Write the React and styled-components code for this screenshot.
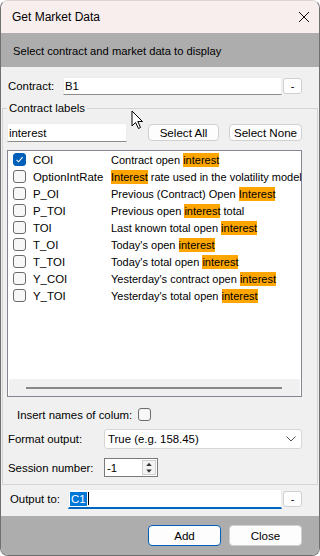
import styled, { createGlobalStyle } from "styled-components";

const GlobalStyle = createGlobalStyle`
  body {
    margin: 0;
    background: #fff;
    font-family: "Liberation Sans", Arial, sans-serif;
    font-size: 11px;
    color: #000;
  }
`

const Window = styled.div`
  position: relative;
  width: 320px;
  height: 556px;
  box-sizing: border-box;
  display: flex;
  flex-direction: column;
  border: 1px solid #6f6f6f;
  border-top-color: #ddd3d3;
  border-radius: 8px;
  overflow: hidden;
  background: #f0f0f0;
`

const TitleBar = styled.div`
  height: 32px;
  flex-shrink: 0;
  display: flex;
  align-items: center;
  justify-content: space-between;
  padding: 0 9px 0 11px;
  background: #f9eeee;
  font-size: 12px;
`

const Banner = styled.div`
  height: 34px;
  flex-shrink: 0;
  display: flex;
  align-items: center;
  padding: 2px 0 0 12px;
  box-sizing: border-box;
  background: #adadad;
  font-size: 11.2px;
`

const Body = styled.div`
  flex: 1;
  display: flex;
  flex-direction: column;
  padding-top: 10px;
`

const Row = styled.div`
  display: flex;
  align-items: center;
  padding-left: ${p => p.$indent || 0}px;
  margin-top: ${p => p.$top || 0}px;
`

const Label = styled.div`
  width: ${p => p.$w ? `${p.$w}px` : "auto"};
  flex-shrink: 0;
  white-space: nowrap;
  font-size: 11.4px;
`

const TextBox = styled.div`
  width: ${p => p.$w}px;
  height: ${p => p.$h || 18}px;
  box-sizing: border-box;
  display: flex;
  align-items: center;
  padding: 0 1px;
  background: #fff;
  border: 1px solid #ececec;
  border-bottom: ${p => p.$focus ? "2px solid #0067c0" : "1px solid #8c8c8c"};
  font-size: 11.4px;
`

const Selected = styled.span`
  background: #0078d7;
  color: #fff;
  padding: 0 1px;
  margin-right: 1px;
  line-height: 14px;
`

const Caret = styled.span`
  display: inline-block;
  width: 1px;
  height: 13px;
  background: #000;
`

const MiniButton = styled.div`
  width: 19px;
  height: 16px;
  margin-left: 1px;
  box-sizing: border-box;
  display: flex;
  align-items: center;
  justify-content: center;
  background: #fdfdfd;
  border: 1px solid #d0d0d0;
  border-radius: 3px;
  line-height: 1;
`

const Button = styled.div`
  width: ${p => p.$w || 73}px;
  height: ${p => p.$h || 21}px;
  margin-left: ${p => p.$gap || 0}px;
  box-sizing: border-box;
  display: flex;
  align-items: center;
  justify-content: center;
  background: #fdfdfd;
  border: 1px solid ${p => p.$primary ? "#005fb8" : "#d0d0d0"};
  border-radius: 4px;
  font-size: 11.6px;
`

const Group = styled.fieldset`
  margin: 6px 1px 0 1px;
  padding: 8px 15px 7px 4px;
  border: 1px solid #d4d4d4;
  min-width: 0;
`

const Legend = styled.legend`
  padding: 0 2px;
  line-height: 14px;
  font-size: 11.4px;
`

const ListBox = styled.div`
  margin-top: 8px;
  width: 295px;
  height: 247px;
  box-sizing: border-box;
  display: flex;
  flex-direction: column;
  background: #fff;
  border: 1px solid #828790;
`

const Rows = styled.div`
  flex: 1;
  padding-left: 5px;
`

const ItemRow = styled.div`
  height: 17px;
  display: flex;
  align-items: center;
  white-space: nowrap;
`

const Name = styled.div`
  width: 78px;
  margin-left: 7px;
  flex-shrink: 0;
  font-size: 11.4px;
`

const Mark = styled.span`
  background: #ffa500;
  padding: 1px 0;
`

const Box = styled.span`
  width: 13px;
  height: 13px;
  flex-shrink: 0;
  box-sizing: border-box;
  display: inline-flex;
  align-items: center;
  justify-content: center;
  border-radius: 3px;
  border: 1px solid ${p => p.$checked ? "#005fb8" : "#6b6b6b"};
  background: ${p => p.$checked ? "#005fb8" : "#f7f7f7"};
  margin-left: ${p => p.$gap || 0}px;
`

const ScrollTrack = styled.div`
  height: 17px;
  margin: 0 1px;
  display: flex;
  align-items: center;
  background: #f0f0f0;
`

const Thumb = styled.div`
  flex: 1;
  height: 2px;
  margin: 0 18px 0 17px;
  background: #888;
`

const Select = styled.div`
  width: 198px;
  height: 20px;
  box-sizing: border-box;
  display: flex;
  align-items: center;
  justify-content: space-between;
  padding: 0 5px 0 3px;
  background: #fff;
  border: 1px solid #d6d6d6;
  border-radius: 3px;
  font-size: 11.4px;
`

const Spinner = styled.div`
  width: 54px;
  height: 19px;
  box-sizing: border-box;
  display: flex;
  align-items: center;
  justify-content: space-between;
  padding-left: 2px;
  background: #fff;
  border: 1px solid #7a7a7a;
  font-size: 11.4px;
`

const SpinArrows = styled.div`
  width: 14px;
  height: 15px;
  margin-right: 1px;
  box-sizing: border-box;
  display: flex;
  flex-direction: column;
  border: 1px solid #cfcfcf;
  background: #f3f3f3;
  svg { flex: 1; }
`

const Footer = styled.div`
  height: 39px;
  flex-shrink: 0;
  display: flex;
  align-items: center;
  justify-content: flex-end;
  padding-right: 17px;
  background: #adadad;
`

const Cursor = styled.svg`
  position: absolute;
  left: 130px;
  top: 109px;
`

const items = [
  { name: "COI", checked: true, desc: ["Contract open ", "interest", ""] },
  { name: "OptionIntRate", desc: ["", "Interest", " rate used in the volatility model"] },
  { name: "P_OI", desc: ["Previous (Contract) Open ", "Interest", ""] },
  { name: "P_TOI", desc: ["Previous open ", "interest", " total"] },
  { name: "TOI", desc: ["Last known total open ", "interest", ""] },
  { name: "T_OI", desc: ["Today's open ", "interest", ""] },
  { name: "T_TOI", desc: ["Today's total open ", "interest", ""] },
  { name: "Y_COI", desc: ["Yesterday's contract open ", "interest", ""] },
  { name: "Y_TOI", desc: ["Yesterday's total open ", "interest", ""] },
]

function CheckBox({ checked, gap }) {
  return <Box $checked={checked} $gap={gap}>
    {checked && <svg width="9" height="9" viewBox="0 0 9 9">
      <polyline points="1.5,4.8 3.6,6.8 7.6,2.2" fill="none" stroke="#fff" strokeWidth="1.1"/>
    </svg>}
  </Box>
}

export default function App(){
  return <>
    <GlobalStyle/>
    <Window>
      <TitleBar>
        <span>Get Market Data</span>
        <svg width="12" height="12" viewBox="0 0 12 12">
          <path d="M1 1 L11 11 M11 1 L1 11" stroke="#111" strokeWidth="1"/>
        </svg>
      </TitleBar>
      <Banner>Select contract and market data to display</Banner>
      <Body>
        <Row $indent={7}>
          <Label $w={55}>Contract:</Label>
          <TextBox $w={219}>B1</TextBox>
          <MiniButton>-</MiniButton>
        </Row>
        <Group>
          <Legend>Contract labels</Legend>
          <Row>
            <TextBox $w={120} $h={19}>interest</TextBox>
            <Button $w={71} $h={17} $gap={21}>Select All</Button>
            <Button $w={73} $h={17} $gap={10}>Select None</Button>
          </Row>
          <ListBox>
            <Rows>
              {items.map(it => (
                <ItemRow key={it.name}>
                  <CheckBox checked={it.checked}/>
                  <Name>{it.name}</Name>
                  <span>{it.desc[0]}<Mark>{it.desc[1]}</Mark>{it.desc[2]}</span>
                </ItemRow>
              ))}
            </Rows>
            <ScrollTrack><Thumb/></ScrollTrack>
          </ListBox>
          <Row $indent={10} $top={11}>
            <Label>Insert names of colum:</Label>
            <CheckBox gap={6}/>
          </Row>
          <Row $indent={1} $top={8}>
            <Label $w={96}>Format output:</Label>
            <Select>
              <span>True (e.g. 158.45)</span>
              <svg width="10" height="6" viewBox="0 0 10 6">
                <polyline points="0.5,0.5 5,5 9.5,0.5" fill="none" stroke="#555" strokeWidth="1"/>
              </svg>
            </Select>
          </Row>
          <Row $indent={1} $top={9}>
            <Label $w={96}>Session number:</Label>
            <Spinner>
              <span>-1</span>
              <SpinArrows>
                <svg viewBox="0 0 12 7" width="12" height="7"><polygon points="3,5.5 9,5.5 6,2" fill="#333"/></svg>
                <svg viewBox="0 0 12 7" width="12" height="7"><polygon points="3,1.5 9,1.5 6,5" fill="#333"/></svg>
              </SpinArrows>
            </Spinner>
          </Row>
        </Group>
        <Row $indent={9} $top={4}>
          <Label $w={58}>Output to:</Label>
          <TextBox $w={214} $h={20} $focus><Selected>C1</Selected><Caret/></TextBox>
          <MiniButton>-</MiniButton>
        </Row>
      </Body>
      <Footer>
        <Button $primary>Add</Button>
        <Button $gap={8}>Close</Button>
      </Footer>
      <Cursor width="14" height="20" viewBox="0 0 14 20">
        <polygon points="1,1 1,16 4.5,12.5 7.5,18.5 9.5,17.5 6.8,11.5 11.5,11.5" fill="#fff" stroke="#000" strokeWidth="1" strokeLinejoin="round"/>
      </Cursor>
    </Window>
  </>
}
